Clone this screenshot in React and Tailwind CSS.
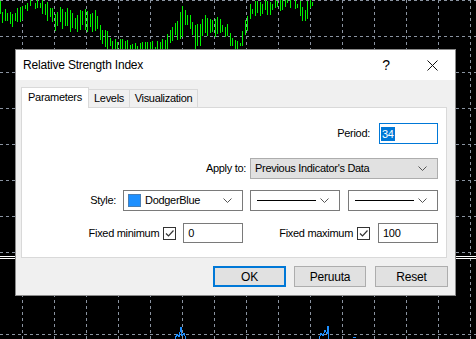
import React from 'react'

// control points for the green price bars: [x, top, bottom]
const pts = [
    [0, 5, 16], [4, 12, 24], [12, 14, 24], [20, 8, 20], [26, 0, 10], [40, 0, 8], [46, 3, 17], [52, 8, 20],
    [56, 14, 30], [60, 10, 26], [66, 12, 28], [74, 14, 30], [80, 12, 28], [90, 10, 30], [96, 10, 28],
    [100, 24, 40], [108, 35, 48], [116, 42, 55], [130, 43, 55], [160, 45, 55], [166, 38, 49], [172, 28, 40],
    [178, 20, 38], [182, 10, 35], [186, 13, 22], [192, 20, 36], [196, 30, 49], [200, 22, 42], [204, 17, 30],
    [210, 22, 37], [218, 18, 32], [226, 25, 37], [232, 36, 49], [240, 40, 48], [246, 20, 36], [250, 6, 18],
    [258, 3, 14], [264, 0, 12], [276, 0, 10], [286, 0, 6], [292, 0, 3], [298, 0, 10], [304, 8, 26], [310, 0, 8],
    [312, 0, 6],
]

const rnd = (i) => {
    const v = Math.sin(i * 12.9898) * 43758.5453
    return v - Math.floor(v)
}

const bars = []
for (let x = 0, i = 0; x <= 312; x += i % 2 ? 3 : 2, i++) {
    let k = 0
    while (k < pts.length - 2 && pts[k + 1][0] < x) k++
    const [x0, t0, b0] = pts[k]
    const [x1, t1, b1] = pts[k + 1]
    const f = x1 === x0 ? 0 : Math.min(1, Math.max(0, (x - x0) / (x1 - x0)))
    const top = t0 + (t1 - t0) * f + rnd(i) * 8 - 4
    const bot = b0 + (b1 - b0) * f + rnd(i + 100) * 8 - 4
    if (bot - top > 2) bars.push([x, Math.round(Math.max(0, top)), Math.round(bot)])
}

const vLines = Array.from({ length: 15 }, (_, i) => 22 + i * 32)
const hLines = [0, 36, 72, 108, 144, 180, 216, 252, 334]

const Chart = () => (
    <svg className="absolute inset-0" width="476" height="339" shapeRendering="crispEdges">
        {vLines.map((x) => (
            <line key={'v' + x} x1={x + 0.5} y1="0" x2={x + 0.5} y2="339" stroke="#8a93a0" strokeDasharray="3 3" />
        ))}
        {hLines.map((y) => (
            <line key={'h' + y} x1="0" y1={y + 0.5} x2="476" y2={y + 0.5} stroke="#8a93a0" strokeDasharray="3 3" />
        ))}
        <line x1="0" y1="256.5" x2="476" y2="256.5" stroke="#ffffff" />
        <line x1="0" y1="258.5" x2="476" y2="258.5" stroke="#ffffff" />
        {bars.map(([x, t, b]) => (
            <line key={'b' + x} x1={x + 0.5} y1={t} x2={x + 0.5} y2={b} stroke="#00f000" />
        ))}
        <polyline points="175,339 177,334 179,337 181,327 182,336 184,333 186,339" fill="none" stroke="#1e90ff" />
        <polyline points="319,339 321,333 323,336 325,330 327,334 328,326 329,339" fill="none" stroke="#1e90ff" />
        <line x1="353" y1="337.5" x2="356" y2="337.5" stroke="#1e90ff" />
    </svg>
)

const Chevron = () => (
    <svg width="9" height="5" viewBox="0 0 9 5" className="shrink-0">
        <path d="M0.5 0.5 L4.5 4.5 L8.5 0.5" fill="none" stroke="#555" />
    </svg>
)

const Check = () => (
    <span className="w-[13px] h-[13px] border border-[#333] bg-white flex items-center justify-center">
        <svg width="11" height="11" viewBox="0 0 11 11">
            <path d="M2 5.5 L4.5 8 L9.5 2.5" fill="none" stroke="#333" strokeWidth="1.2" />
        </svg>
    </span>
)

const LineSelect = () => (
    <div className="w-[90px] h-[21px] bg-white border border-[#7a7a7a] flex items-center pl-[6px] pr-[10px]">
        <span className="w-[59px] h-px bg-black" />
        <span className="ml-auto"><Chevron /></span>
    </div>
)

export default function App() {
    return (
        <div className="relative w-[476px] h-[339px] bg-black overflow-hidden font-['Liberation_Sans',Arial,sans-serif] text-[11px] tracking-[-0.3px] text-black">
            <Chart />

            {/* dialog window */}
            <div className="absolute left-[15px] top-[49px] w-[441px] h-[247px] bg-[#f0f0f0] border border-[#8a8a8a] flex flex-col">
                {/* title bar */}
                <div className="h-[30px] bg-white flex items-center pl-[7px] shrink-0">
                    <span className="text-[12px] tracking-[-0.2px]">Relative Strength Index</span>
                    <div className="ml-auto flex h-full">
                        <div className="w-[46px] flex items-center justify-center text-[14px]">?</div>
                        <div className="w-[46px] flex items-center justify-center">
                            <svg width="11" height="11" viewBox="0 0 11 11">
                                <path d="M0.5 0.5 L10.5 10.5 M10.5 0.5 L0.5 10.5" stroke="#111" />
                            </svg>
                        </div>
                    </div>
                </div>

                {/* body */}
                <div className="flex flex-col pl-[5px] pr-[8px] pt-[7px]">
                    {/* tabs */}
                    <div className="flex h-[21px] -mb-px relative z-10">
                        <div className="w-[68px] h-[21px] bg-white border border-b-0 border-[#d9d9d9] flex items-center justify-center pb-[2px]">Parameters</div>
                        <div className="w-[41px] h-[18px] mt-[2px] border-t border-r border-[#d9d9d9] flex items-center justify-center">Levels</div>
                        <div className="w-[68px] h-[18px] mt-[2px] border-t border-r border-[#d9d9d9] flex items-center justify-center">Visualization</div>
                    </div>

                    {/* panel */}
                    <div className="h-[151px] bg-white border border-[#d9d9d9] flex flex-col pt-[15px] pr-[8px]">
                        <div className="flex justify-end items-center h-[21px]">
                            <span>Period:</span>
                            <div className="ml-[9px] w-[59px] h-[21px] border border-[#0078d7] flex items-center pl-[1px]">
                                <span className="bg-[#0078d7] text-white px-px leading-[14px]">34</span>
                            </div>
                        </div>

                        <div className="flex justify-end items-center h-[21px] mt-[14px]">
                            <span>Apply to:</span>
                            <div className="ml-[4px] w-[188px] h-[21px] bg-[#e1e1e1] border border-[#adadad] flex items-center pl-[4px] pr-[10px]">
                                <span>Previous Indicator's Data</span>
                                <span className="ml-auto"><Chevron /></span>
                            </div>
                        </div>

                        <div className="flex justify-end items-center h-[21px] mt-[11px]">
                            <span>Style:</span>
                            <div className="ml-[7px] w-[120px] h-[21px] bg-white border border-[#7a7a7a] flex items-center pl-[4px] pr-[10px]">
                                <span className="w-[13px] h-[13px] bg-[#1e90ff] border border-[#4a7fb5]" />
                                <span className="ml-[4px]">DodgerBlue</span>
                                <span className="ml-auto"><Chevron /></span>
                            </div>
                            <div className="ml-[7px]"><LineSelect /></div>
                            <div className="ml-[8px]"><LineSelect /></div>
                        </div>

                        <div className="flex justify-end items-center h-[20px] mt-[12px]">
                            <span>Fixed minimum</span>
                            <span className="ml-[4px]"><Check /></span>
                            <div className="ml-[7px] w-[60px] h-[20px] border border-[#7a7a7a] flex items-center pl-[4px]">0</div>
                            <span className="ml-[36px]">Fixed maximum</span>
                            <span className="ml-[4px]"><Check /></span>
                            <div className="ml-[8px] w-[60px] h-[20px] border border-[#7a7a7a] flex items-center pl-[4px]">100</div>
                        </div>
                    </div>

                    {/* buttons */}
                    <div className="flex justify-end mt-[8px] -mr-px text-[12px] tracking-[-0.2px]">
                        <button className="w-[73px] h-[21px] bg-[#e1e1e1] border-2 border-[#0078d7] flex items-center justify-center">OK</button>
                        <button className="ml-[8px] w-[72px] h-[21px] bg-[#e1e1e1] border border-[#adadad] flex items-center justify-center">Peruuta</button>
                        <button className="ml-[9px] w-[73px] h-[21px] bg-[#e1e1e1] border border-[#adadad] flex items-center justify-center">Reset</button>
                    </div>
                </div>
            </div>
        </div>
    )
}
